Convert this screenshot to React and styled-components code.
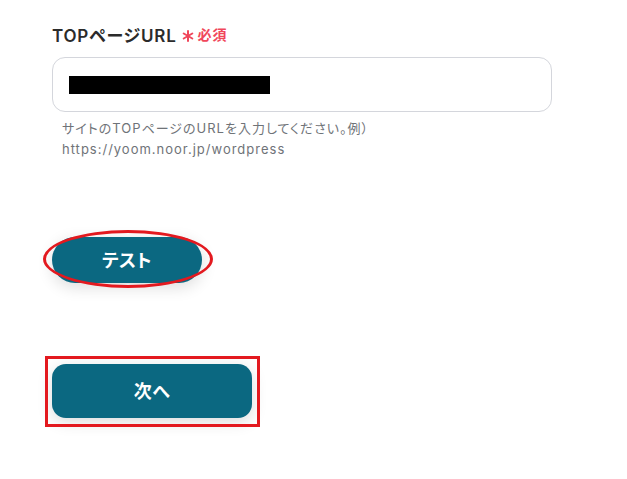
import React from 'react';
import styled, { createGlobalStyle } from 'styled-components';

const GlobalStyle = createGlobalStyle`
  body {
    margin: 0;
    background: #ffffff;
    font-family: Inter, "Noto Sans CJK JP", sans-serif;
    font-feature-settings: "palt";
  }
`;

const Page = styled.div`
  width: 627px;
  height: 479px;
  padding: 24px 0 0 52px;
  box-sizing: border-box;
  overflow: hidden;
`;

const Label = styled.div`
  display: flex;
  align-items: center;
  height: 20px;
  font-size: 17px;
  font-weight: 600;
  letter-spacing: 0.8px;
  color: #2b2b2b;
`;

const Required = styled.span`
  display: flex;
  align-items: center;
  margin-left: 5px;
  color: #f0475b;
  font-size: 14px;
  font-weight: 600;
  letter-spacing: 1px;

  svg {
    margin-right: 4px;
    margin-top: 4px;
  }
`;

const InputBox = styled.div`
  margin-top: 13px;
  width: 500px;
  height: 55px;
  box-sizing: border-box;
  border: 1px solid #d4d6dc;
  border-radius: 13px;
  padding-left: 16px;
  display: flex;
  align-items: center;
`;

const Redacted = styled.div`
  width: 201px;
  height: 18px;
  margin-top: 1px;
  background: #000;
`;

const Help = styled.p`
  margin: 6px 0 0 10px;
  font-size: 13px;
  line-height: 21px;
  letter-spacing: 1px;
  color: #6f7378;
`;

const ButtonWrap = styled.div`
  position: relative;
  width: ${(p) => p.w}px;
  margin-top: ${(p) => p.mt}px;
`;

const Button = styled.button`
  display: flex;
  align-items: center;
  justify-content: center;
  width: ${(p) => p.w}px;
  height: ${(p) => p.h}px;
  padding: 0 0 3px;
  border: none;
  border-radius: ${(p) => p.r}px;
  background: #0b6881;
  color: #fff;
  font-family: inherit;
  font-feature-settings: inherit;
  font-size: 18px;
  font-weight: 700;
  letter-spacing: 0.5px;
  box-shadow: 0 4px 16px rgba(0, 0, 0, 0.14);
`;

// red annotation marks drawn over the buttons
const Ellipse = styled.div`
  position: absolute;
  left: -9px;
  top: -7px;
  width: 170px;
  height: 58px;
  box-sizing: border-box;
  border: 3px solid #e3191f;
  border-radius: 50%;
`;

const Frame = styled.div`
  position: absolute;
  left: -7px;
  top: -8px;
  width: 215px;
  height: 71px;
  box-sizing: border-box;
  border: 3px solid #e3191f;
`;

const Asterisk = () => (
  <svg width="12" height="12" viewBox="0 0 12 12" stroke="currentColor" strokeWidth="2" strokeLinecap="round">
    <line x1="6" y1="1" x2="6" y2="11" />
    <line x1="1.7" y1="3.5" x2="10.3" y2="8.5" />
    <line x1="1.7" y1="8.5" x2="10.3" y2="3.5" />
  </svg>
);

export default function App() {
  return (
    <>
      <GlobalStyle />
      <Page>
        <Label>
          TOPページURL
          <Required>
            <Asterisk />
            必須
          </Required>
        </Label>
        <InputBox>
          <Redacted />
        </InputBox>
        <Help>
          サイトのTOPページのURLを入力してください。例）
          <br />
          https://yoom.noor.jp/wordpress
        </Help>
        <ButtonWrap w={150} mt={77}>
          <Button w={150} h={46} r={23}>テスト</Button>
          <Ellipse />
        </ButtonWrap>
        <ButtonWrap w={200} mt={81}>
          <Button w={200} h={54} r={14}>次へ</Button>
          <Frame />
        </ButtonWrap>
      </Page>
    </>
  );
}
